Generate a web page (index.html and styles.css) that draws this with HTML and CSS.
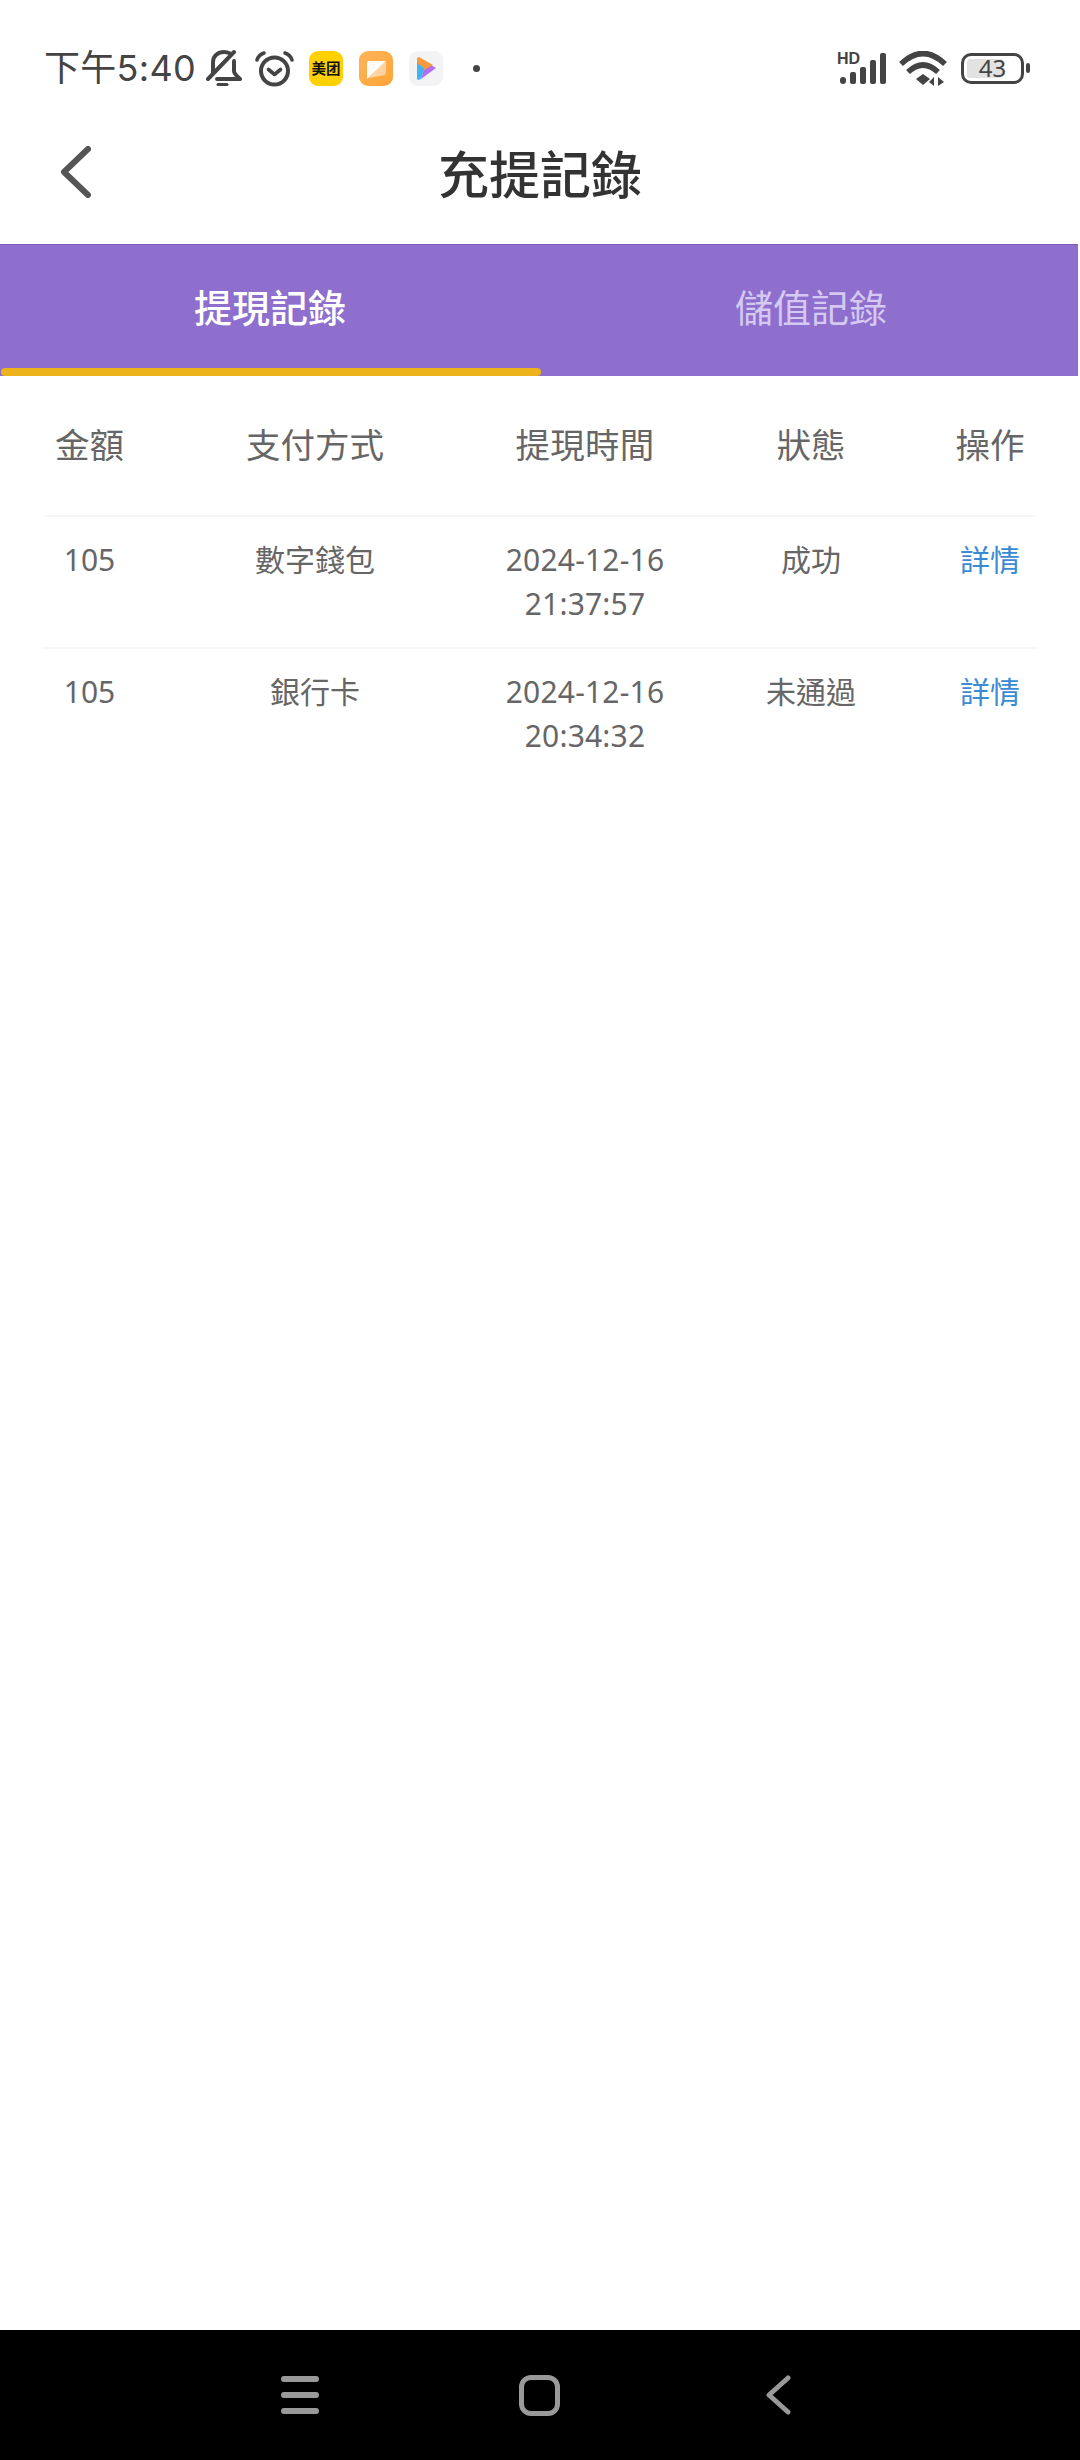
FILE: index.html
```html
<!DOCTYPE html>
<html lang="zh-Hant">
<head>
    <meta charset="UTF-8">
    <meta name="viewport" content="width=device-width, initial-scale=1.0">
    <title>充提記錄</title>
    <link rel="stylesheet" href="styles.css">
</head>
<body>
    <div class="page">
        <div class="status-bar">
            <span class="clock">下午5:40</span>
            <svg class="ic-bell" width="36" height="38" viewBox="0 0 36 38" fill="none" stroke="#444" stroke-width="4" stroke-linecap="round" stroke-linejoin="round">
                <path d="M7 23V13C7 7 12 3 18 3c2 0 4 .5 6 1.500"/>
                <path d="M28 12v10c0 3 3 5 6 8H11"/>
                <path d="M28 3 2 30"/>
                <path d="M12 35.500h9" stroke-width="3"/>
            </svg>
            <svg class="ic-alarm" width="41" height="37" viewBox="0 0 41 37" fill="none" stroke="#444" stroke-linecap="round" stroke-linejoin="round">
                <circle cx="20.500" cy="21" r="13.500" stroke-width="4"/>
                <path d="M14.500 19.500l6 5 6-5" stroke-width="3.600"/>
                <path d="M3 10c1-3 4-6 7-7M38 10c-1-3-4-6-7-7" stroke-width="3.600"/>
            </svg>
            <span class="app-meituan">美团</span>
            <svg class="ic-app" width="34" height="35" viewBox="0 0 34 35">
                <defs>
                    <linearGradient id="noteBg" x1="0" y1="0" x2="1" y2="1">
                        <stop offset="0" stop-color="#fdb45c"/>
                        <stop offset="1" stop-color="#ffa436"/>
                    </linearGradient>
                </defs>
                <rect width="34" height="35" rx="9" fill="url(#noteBg)"/>
                <path d="M27 10v11c0 2-1 3-3 3.500L9 27z" fill="#ffdcb8" opacity=".8"/>
                <path d="M8 12a2 2 0 0 1 2-2h17L8 28z" fill="#fff" opacity=".95"/>
            </svg>
            <svg class="ic-app" width="34" height="35" viewBox="0 0 34 35">
                <rect width="34" height="35" rx="9" fill="#f3f3f6"/>
                <path d="M27 17 12 28l3-10 7-4z" fill="#b070f0"/>
                <path d="M8 7l2-1 14 8-9 5-7-6z" fill="#f59a3e"/>
                <path d="M8 12l7 5v2l-3 9-3 1-1-1z" fill="#3fb4f2"/>
            </svg>
            <span class="dot"></span>
            <div class="status-right">
                <div class="signal">
                    <span class="hd">HD</span>
                    <svg width="50" height="32" viewBox="0 0 50 32">
                        <rect x="3" y="25" width="6" height="7" rx="3" fill="#444"/>
                        <rect x="13" y="20" width="6" height="12" rx="2" fill="#444"/>
                        <rect x="23" y="15" width="6" height="17" rx="2" fill="#444"/>
                        <rect x="33" y="8" width="6" height="24" rx="2" fill="#444"/>
                        <rect x="43" y="1" width="6" height="31" rx="2" fill="#444"/>
                    </svg>
                </div>
                <svg class="ic-wifi" width="48" height="35" viewBox="0 0 48 35" fill="none" stroke="#444" stroke-width="5.500">
                    <path d="M2 13Q24-8 46 13"/>
                    <path d="M9 21Q24 7 39 21"/>
                    <path d="M17 28l7-5 7 5-7 6z" fill="#444" stroke="none"/>
                    <path d="M35 35v-9l-5 5zM39 35v-9l6 5z" fill="#444" stroke="none"/>
                </svg>
                <div class="battery">
                    <span class="battery-fill"></span>
                    <span class="battery-num">43</span>
                </div>
                <span class="battery-nub"></span>
            </div>
        </div>

        <div class="title-bar">
            <svg class="back" width="31" height="52" viewBox="0 0 31 52" fill="none" stroke="#555" stroke-width="6" stroke-linecap="round" stroke-linejoin="round">
                <path d="M28 3 4 26l24 23"/>
            </svg>
            <h1>充提記錄</h1>
        </div>

        <div class="tabs">
            <div class="tab active">提現記錄</div>
            <div class="tab">儲值記錄</div>
        </div>

        <div class="table">
            <div class="row head">
                <div>金額</div>
                <div>支付方式</div>
                <div>提現時間</div>
                <div>狀態</div>
                <div>操作</div>
            </div>
            <div class="row">
                <div>105</div>
                <div>數字錢包</div>
                <div>2024-12-16<br>21:37:57</div>
                <div>成功</div>
                <div class="link">詳情</div>
            </div>
            <div class="row">
                <div>105</div>
                <div>銀行卡</div>
                <div>2024-12-16<br>20:34:32</div>
                <div>未通過</div>
                <div class="link">詳情</div>
            </div>
        </div>

        <div class="nav-bar">
            <div class="nav-menu"><span></span><span></span><span></span></div>
            <span class="nav-home"></span>
            <svg width="25" height="40" viewBox="0 0 25 40" fill="none" stroke="#999" stroke-width="5" stroke-linecap="round" stroke-linejoin="round">
                <path d="M22 3 3 20l19 17"/>
            </svg>
        </div>
    </div>
</body>
</html>
```

FILE: styles.css
```css
body {
    margin: 0;
    background: #fff;
    font-family: "Noto Sans", "Noto Sans CJK TC", sans-serif;
}
.page {
    width: 1080px;
    height: 2460px;
    display: flex;
    flex-direction: column;
    overflow: hidden;
}

/* status bar */
.status-bar {
    height: 72px;
    padding: 32px 50px 0 44px;
    display: flex;
    align-items: center;
    color: #444;
}
.clock {
    font-family: Inter, "Noto Sans CJK TC", sans-serif;
    font-size: 36px;
    letter-spacing: .3px;
    line-height: 40px;
    width: 162px;
    white-space: nowrap;
}
.ic-alarm {
    margin-left: 12px;
}
.app-meituan {
    width: 34px;
    height: 35px;
    margin-left: 14px;
    border-radius: 9px;
    background: #ffd100;
    color: #111;
    font-size: 14.5px;
    font-weight: 700;
    line-height: 35px;
    text-align: center;
    white-space: nowrap;
}
.ic-app {
    margin-left: 16px;
}
.dot {
    width: 7px;
    height: 7px;
    margin-left: 30px;
    border-radius: 50%;
    background: #444;
}
.status-right {
    margin-left: auto;
    display: flex;
    align-items: center;
}
.signal {
    position: relative;
    height: 32px;
}
.hd {
    position: absolute;
    left: 0;
    top: 0;
    font-family: "Liberation Sans", sans-serif;
    font-size: 16px;
    font-weight: 700;
    line-height: 13px;
    color: #444;
}
.ic-wifi {
    margin-left: 12px;
}
.battery {
    position: relative;
    width: 63px;
    height: 31px;
    margin-left: 14px;
    box-sizing: border-box;
    border: 3.5px solid #444;
    border-radius: 10px;
}
.battery-fill {
    position: absolute;
    left: 3px;
    top: 3px;
    bottom: 3px;
    width: 36px;
    border-radius: 3px;
    background: #e2e2e2;
}
.battery-num {
    position: absolute;
    left: 0;
    right: 0;
    top: 0;
    text-align: center;
    font-size: 24px;
    line-height: 24px;
    color: #444;
}
.battery-nub {
    width: 4px;
    height: 10px;
    margin-left: 2px;
    border-radius: 2px;
    background: #444;
}

/* title */
.title-bar {
    height: 140px;
    position: relative;
    display: flex;
    align-items: center;
    justify-content: center;
}
.back {
    position: absolute;
    left: 60px;
    top: 42px;
}
h1 {
    margin: 0;
    font-size: 51px;
    font-weight: 500;
    line-height: 60px;
    color: #333;
}

/* tabs */
.tabs {
    width: 1078px;
    height: 132px;
    box-sizing: border-box;
    display: flex;
    background: #8e6fcd;
    border-top: 1px solid #7a5cb4;
}
.tab {
    flex: 0 0 540px;
    box-sizing: border-box;
    position: relative;
    text-align: center;
    font-size: 38px;
    line-height: 124px;
    color: #d6c9f1;
}
.tab + .tab {
    padding-left: 2px;
}
.tab.active {
    color: #fff;
    font-weight: 500;
}
.tab.active::after {
    content: '';
    position: absolute;
    left: 1px;
    right: -1px;
    bottom: 0;
    height: 8px;
    border-radius: 4px;
    background: #ecb31c;
}

/* table */
.table {
    flex: 1;
    margin: 0 44px;
    color: #666;
    font-size: 30px;
    line-height: 44px;
}
.row {
    display: grid;
    grid-template-columns: 91px 360px 180px 272px 86px;
    padding: 21px 0;
    border-top: 2px solid #f5f5f5;
    text-align: center;
}
.row > div:nth-child(3) {
    letter-spacing: .2px;
}
.row.head {
    padding: 0 0 2px;
    height: 139px;
    box-sizing: border-box;
    border-top: 0;
    align-items: center;
    font-size: 34.5px;
}
.link {
    color: #3a8bd4;
}

/* bottom nav */
.nav-bar {
    height: 130px;
    background: #000;
    position: relative;
    display: flex;
    align-items: center;
    padding: 0 289px 0 281px;
    justify-content: space-between;
}
.nav-menu {
    width: 38px;
    display: flex;
    flex-direction: column;
    gap: 10px;
}
.nav-menu span {
    height: 6px;
    border-radius: 3px;
    background: #999;
}
.nav-home {
    width: 41px;
    height: 41px;
    margin-right: 7px;
    box-sizing: border-box;
    border: 5px solid #999;
    border-radius: 12px;
}
```
